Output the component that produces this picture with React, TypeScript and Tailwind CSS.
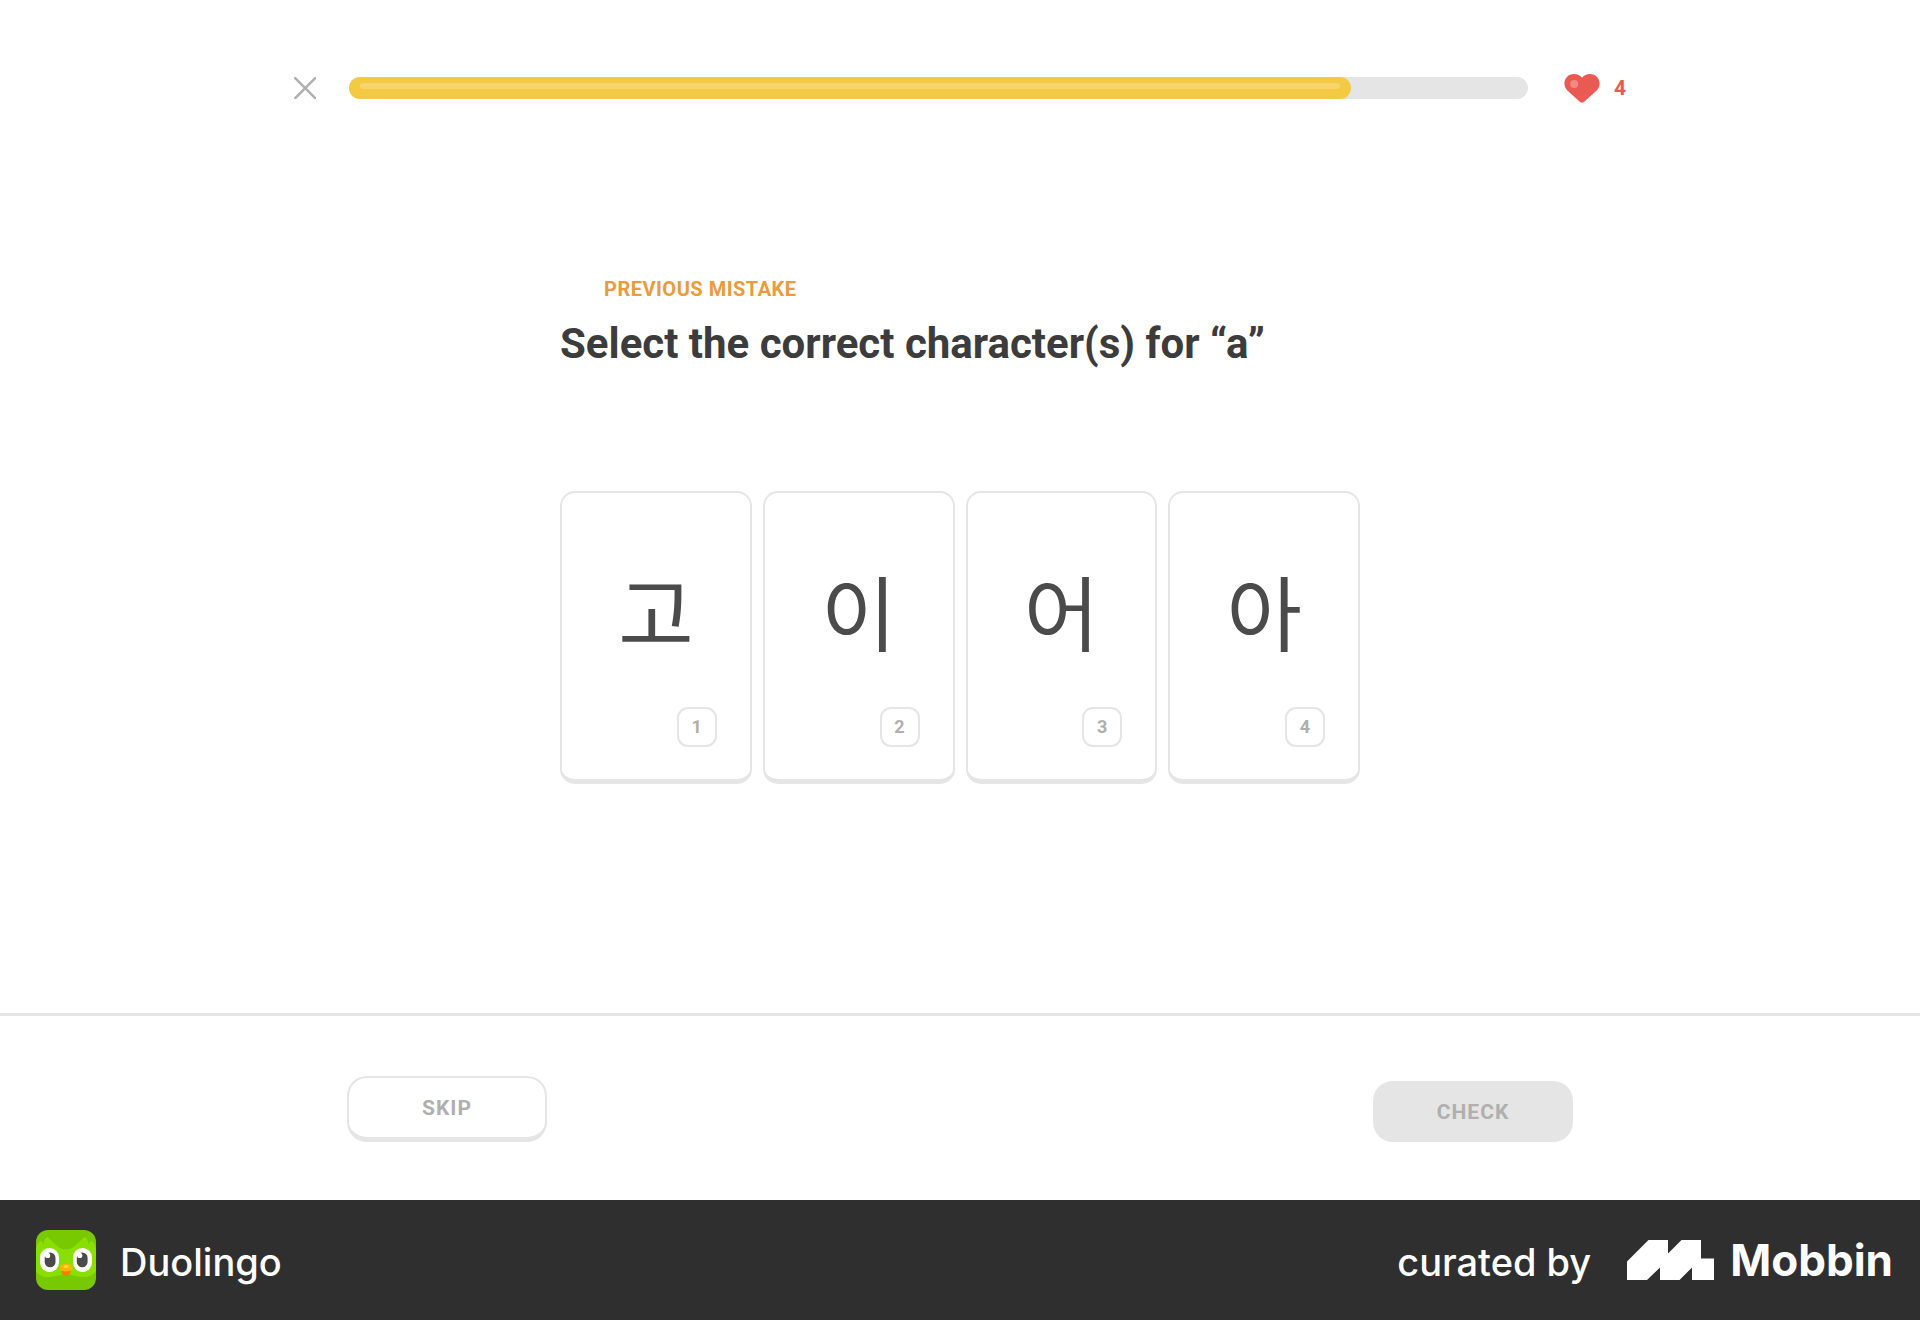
const choices = [
  { character: "고", key: "1" },
  { character: "이", key: "2" },
  { character: "어", key: "3" },
  { character: "아", key: "4" },
];

const progress = 85;

function CloseIcon() {
  return (
    <svg viewBox="0 0 22 22" className="size-[22px]" fill="none" stroke="#afafaf" strokeWidth="2.4" strokeLinecap="round" aria-hidden="true">
      <path d="M1.200 1.200l20 20M21.200 1.200L1.200 21.200" />
    </svg>
  );
}

function HeartIcon() {
  return (
    <svg viewBox="0 0 36 30" className="h-[30px] w-9" aria-hidden="true">
      <path
        d="M18 4.8C20 2.200 23 1 26 1c5.400 0 9.600 4.200 9.600 9.500 0 2.800-1.100 5.200-3 7L20.200 28.700c-1.300 1.200-3.100 1.200-4.400 0L3.400 17.500C1.500 15.700.4 13.300.4 10.500.4 5.200 4.600 1 10 1c3 0 6 1.200 8 3.800z"
        fill="#ea5a52"
      />
      <circle cx="10.200" cy="11" r="4" fill="#f18a84" />
    </svg>
  );
}

function OwlIcon() {
  return (
    <svg viewBox="0 0 60 60" className="size-[60px] rounded-xl" aria-hidden="true">
      <rect width="60" height="60" fill="#78c900" />
      <path
        d="M0 20C.4 16 1.600 13 4 11c.8-.6 1.500-.3 1.900.6l1.500 3.200C7.700 12 8.400 9.400 9.800 7.700c.6-.7 1.500-.7 2.200-.1l8.600 8c3 2.700 6 4 9.400 4s6.400-1.300 9.400-4l8.600-8c.7-.6 1.600-.6 2.200.1 1.400 1.700 2.100 4.300 2.400 7.100l1.500-3.200c.4-.9 1.100-1.200 1.900-.6 2.400 2 3.600 5 4 9v21c-2.400 4-6.800 6-12 6-7 0-11.500-2.500-18-2.500S19 47 12 47C6.800 47 2.400 45 0 41z"
        fill="#89e000"
      />
      <rect x="4" y="18" width="19" height="24" rx="9.500" fill="#fff" />
      <rect x="37" y="18" width="19" height="24" rx="9.500" fill="#fff" />
      <rect x="8.700" y="22.500" width="10.800" height="14.800" rx="5.400" fill="#4b4b4b" />
      <rect x="40.800" y="22.500" width="10.800" height="14.800" rx="5.400" fill="#4b4b4b" />
      <circle cx="11.600" cy="25.400" r="2.600" fill="#fff" />
      <circle cx="43.700" cy="25.400" r="2.600" fill="#fff" />
      <path d="M25 40h10l-.8 3.300c-.5 1.900-2 2.900-4.200 2.900s-3.700-1-4.200-2.900z" fill="#f48000" />
      <path d="M23.600 38.200c0-2.300 3.300-4.400 6.400-4.400s6.400 2.100 6.400 4.400c0 1.500-1.300 2.400-3 2.700-2.300.4-4.500.4-6.800 0-1.700-.3-3-1.200-3-2.700z" fill="#ffb400" />
      <ellipse cx="30" cy="36.500" rx="2.600" ry="1.500" fill="#ffde20" />
    </svg>
  );
}

function MobbinMark() {
  return (
    <svg viewBox="0 0 87 40" className="h-10 w-[87px]" fill="#fff" aria-hidden="true">
      <path d="M21.500 0H41v13.500L54.500 0H74v18.500h13V40H65V27.500L52.500 40H33V27.500L20 40H0V21.500z" />
    </svg>
  );
}

export default function App() {
  return (
    <div className="flex min-h-screen flex-col bg-white font-['Roboto','Noto_Sans_CJK_KR',sans-serif]">
      <header className="px-6 pt-[72px]">
        <div className="mx-auto flex h-8 max-w-[1332px] items-center">
          <button type="button" aria-label="Close lesson" className="mr-[33px]">
            <CloseIcon />
          </button>
          <div
            role="progressbar"
            aria-label="Lesson progress"
            aria-valuenow={progress}
            aria-valuemin={0}
            aria-valuemax={100}
            className="h-[22px] flex-1 rounded-full bg-[#e5e5e5]"
          >
            <div className="h-full rounded-full bg-[#f4c944] px-[11px] pt-[6px]" style={{ width: `${progress}%` }}>
              <div className="h-[6px] rounded-full bg-[#f7d56b]" />
            </div>
          </div>
          <div className="ml-9 flex items-center gap-[14px] text-[21px] font-bold text-[#ea5a52]">
            <HeartIcon />
            <span className="pt-0.5">4</span>
          </div>
        </div>
      </header>

      <main className="flex-1 px-6 pt-[170px]">
        <div className="mx-auto max-w-[800px]">
          <p className="pl-11 text-xl leading-[30px] font-bold tracking-wide text-[#ea9b3a]">PREVIOUS MISTAKE</p>
          <h1 className="mt-3 text-[42px] leading-[56px] font-bold text-[#3c3c3c]">Select the correct character(s) for “a”</h1>
          <div className="mt-[119px] grid grid-cols-4 gap-[11px]">
            {choices.map((choice) => (
              <button
                key={choice.key}
                type="button"
                className="flex h-[293px] flex-col rounded-[15px] border-2 border-b-[5px] border-[#e5e5e5] pr-[33px] pb-8"
              >
                <span className="flex w-full flex-1 items-center justify-center pt-5 pl-[33px] font-['Noto_Sans_CJK_KR',sans-serif] text-[82px] leading-[100px] text-[#4b4b4b]">
                  {choice.character}
                </span>
                <span className="flex size-10 items-center justify-center self-end rounded-[11px] border-2 border-[#e5e5e5] text-lg font-bold text-[#afafaf]">
                  {choice.key}
                </span>
              </button>
            ))}
          </div>
        </div>
      </main>

      <section aria-label="Lesson actions" className="border-t-[3px] border-[#e5e5e5] px-6 pt-[60px] pb-[58px]">
        <div className="mx-auto flex max-w-[1226px] items-end justify-between">
          <button
            type="button"
            className="h-[66px] w-[200px] rounded-[20px] border-2 border-b-[5px] border-[#e5e5e5] pt-0.5 text-[21px] font-bold tracking-wider text-[#afafaf]"
          >
            SKIP
          </button>
          <button type="button" disabled className="h-[61px] w-[200px] rounded-[20px] bg-[#e5e5e5] pt-0.5 text-[21px] font-bold tracking-wider text-[#afafaf]">
            CHECK
          </button>
        </div>
      </section>

      <footer className="flex h-[120px] items-center justify-between bg-[#2f2f2f] pr-[27px] pl-9 font-['Inter',sans-serif] text-[38px] leading-[48px] font-medium text-white">
        <div className="flex items-center gap-6">
          <OwlIcon />
          <span className="pt-1">Duolingo</span>
        </div>
        <div className="flex items-center">
          <span className="pt-1">curated by</span>
          <span className="ml-9">
            <MobbinMark />
          </span>
          <span className="ml-4 text-[44px] font-bold">Mobbin</span>
        </div>
      </footer>
    </div>
  );
}
